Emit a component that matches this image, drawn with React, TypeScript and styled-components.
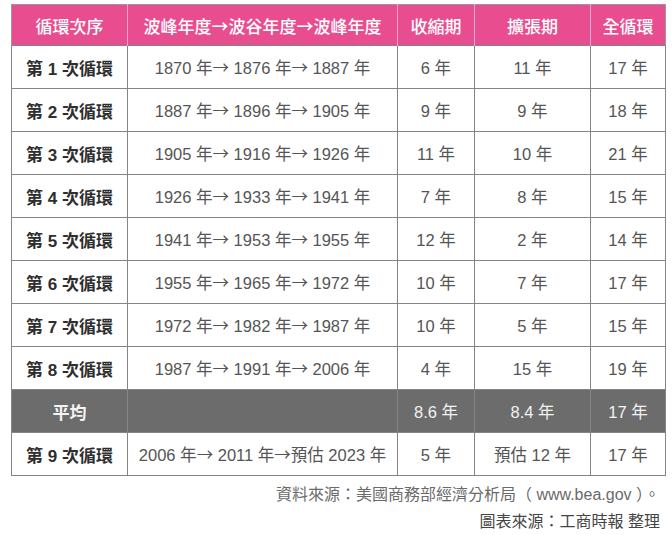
import React from "react";
import styled, { createGlobalStyle } from "styled-components";

const Global = createGlobalStyle`
  html, body { margin: 0; padding: 0; background: #fff; }
  body { font-family: "Liberation Sans", "Noto Sans CJK TC", sans-serif; }
`;

const Page = styled.div`
  width: 672px;
  height: 535px;
  padding: 4px 8px 0 11px;
  box-sizing: border-box;
`;

const Table = styled.table`
  width: 654px;
  border-collapse: collapse;
  table-layout: fixed;
  border: 1px solid #9a9a9a;
`;

const HeadCell = styled.th`
  height: 40px;
  padding: 0;
  background: #e84e8f;
  color: #fff;
  font-size: 17px;
  font-weight: 500;
  text-align: center;
  border-left: 1px solid #f4a6c8;
  &:first-child { border-left: 1px solid #9a9a9a; }
`;

const Row = styled.tr<{ $avg?: boolean }>`
  height: 43px;
  background: ${(p) => (p.$avg ? "#6c6c6c" : "#fff")};
`;

const Cell = styled.td<{ $avg?: boolean }>`
  padding: 0;
  border: 1px solid #858585;
  text-align: center;
  font-size: 16.5px;
  color: ${(p) => (p.$avg ? "#f2f2f2" : "#555")};
  white-space: nowrap;
`;

const LabelCell = styled(Cell)`
  font-weight: 700;
  font-size: 17px;
  color: ${(p) => (p.$avg ? "#f4f4f4" : "#2e2e2e")};
`;

const Arrow = styled.span`
  font-family: "Noto Sans CJK TC", sans-serif;
`;

const Source = styled.div<{ $dark?: boolean }>`
  text-align: right;
  font-size: 16px;
  color: ${(p) => (p.$dark ? "#444" : "#6a6a6a")};
  line-height: 20px;
  margin-top: ${(p) => (p.$dark ? "7px" : "9px")};
  padding-right: 4px;
`;

const withArrows = (s: string) =>
  s.split("→").map((part, i) => (
    <React.Fragment key={i}>
      {i > 0 && <Arrow>→</Arrow>}
      {part}
    </React.Fragment>
  ));

const rows = [
  ["第 1 次循環", "1870 年→ 1876 年→ 1887 年", "6 年", "11 年", "17 年"],
  ["第 2 次循環", "1887 年→ 1896 年→ 1905 年", "9 年", "9 年", "18 年"],
  ["第 3 次循環", "1905 年→ 1916 年→ 1926 年", "11 年", "10 年", "21 年"],
  ["第 4 次循環", "1926 年→ 1933 年→ 1941 年", "7 年", "8 年", "15 年"],
  ["第 5 次循環", "1941 年→ 1953 年→ 1955 年", "12 年", "2 年", "14 年"],
  ["第 6 次循環", "1955 年→ 1965 年→ 1972 年", "10 年", "7 年", "17 年"],
  ["第 7 次循環", "1972 年→ 1982 年→ 1987 年", "10 年", "5 年", "15 年"],
  ["第 8 次循環", "1987 年→ 1991 年→ 2006 年", "4 年", "15 年", "19 年"],
];

export default function App() {
  return (
    <Page>
      <Global />
      <Table>
        <colgroup>
          <col style={{ width: 116 }} />
          <col style={{ width: 270 }} />
          <col style={{ width: 77 }} />
          <col style={{ width: 116 }} />
          <col style={{ width: 75 }} />
        </colgroup>
        <thead>
          <tr>
            <HeadCell>循環次序</HeadCell>
            <HeadCell>{withArrows("波峰年度→波谷年度→波峰年度")}</HeadCell>
            <HeadCell>收縮期</HeadCell>
            <HeadCell>擴張期</HeadCell>
            <HeadCell>全循環</HeadCell>
          </tr>
        </thead>
        <tbody>
          {rows.map((r) => (
            <Row key={r[0]}>
              <LabelCell>{r[0]}</LabelCell>
              <Cell>{withArrows(r[1])}</Cell>
              <Cell>{r[2]}</Cell>
              <Cell>{r[3]}</Cell>
              <Cell>{r[4]}</Cell>
            </Row>
          ))}
          <Row $avg>
            <LabelCell $avg>平均</LabelCell>
            <Cell $avg></Cell>
            <Cell $avg>8.6 年</Cell>
            <Cell $avg>8.4 年</Cell>
            <Cell $avg>17 年</Cell>
          </Row>
          <Row>
            <LabelCell>第 9 次循環</LabelCell>
            <Cell>{withArrows("2006 年→ 2011 年→預估 2023 年")}</Cell>
            <Cell>5 年</Cell>
            <Cell>預估 12 年</Cell>
            <Cell>17 年</Cell>
          </Row>
        </tbody>
      </Table>
      <Source>資料來源：美國商務部經濟分析局（ www.bea.gov ）。</Source>
      <Source $dark>圖表來源：工商時報 整理</Source>
    </Page>
  );
}
